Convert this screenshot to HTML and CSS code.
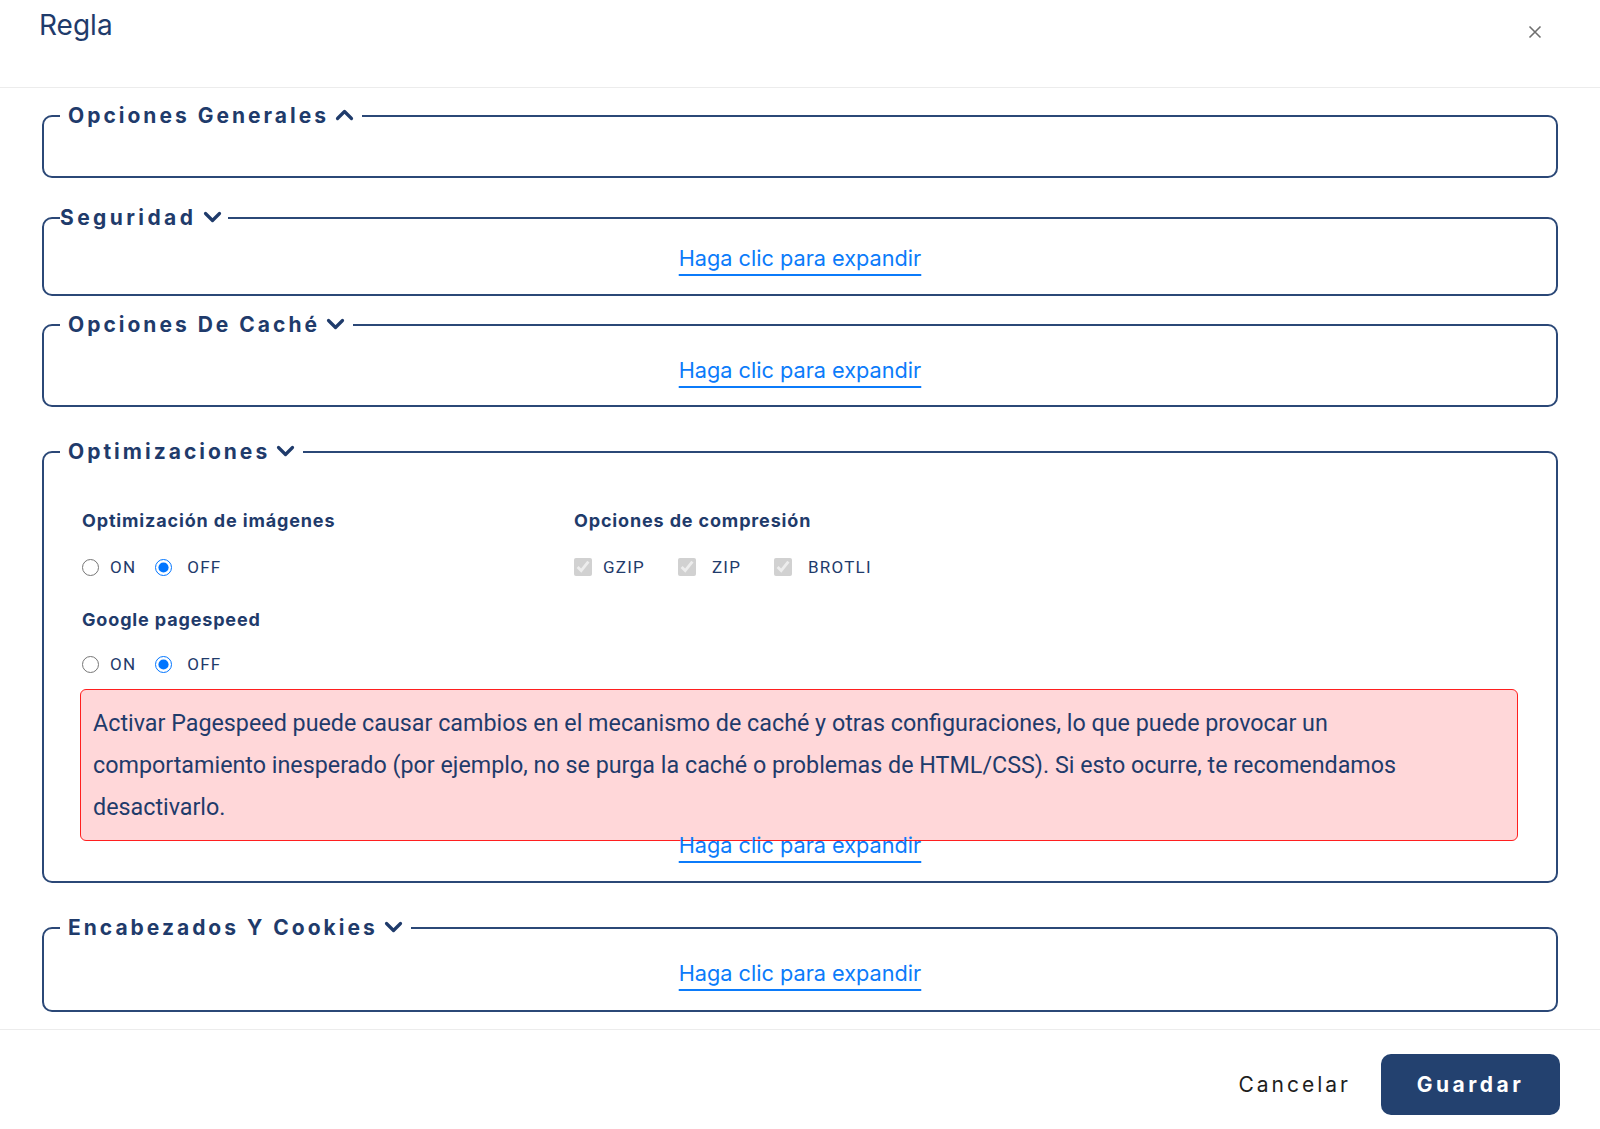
FILE: index.html
```html
<!DOCTYPE html>
<html lang="es">
<head>
  <meta charset="utf-8">
  <title>Regla</title>
  <link rel="stylesheet" href="styles.css">
</head>
<body>
  <div class="modal">
    <div class="modal-header">
      <h2 class="modal-title">Regla</h2>
      <button class="close" aria-label="Cerrar">
        <svg width="14" height="14" viewBox="0 0 14 14"><path d="M1.5 1.5 L12.5 12.5 M12.5 1.5 L1.5 12.5" stroke="#6f6f6f" stroke-width="1.6" fill="none"/></svg>
      </button>
    </div>

    <div class="modal-body">
      <fieldset class="group group-general">
        <legend class="group-legend spaced">Opciones Generales
          <svg class="chevron" width="19" height="12" viewBox="0 0 19 12"><path d="M2.5 9.5 L9.5 2.5 L16.5 9.5" /></svg>
        </legend>
        <div class="group-empty"></div>
      </fieldset>

      <fieldset class="group group-security">
        <legend class="group-legend tight">Seguridad
          <svg class="chevron" width="19" height="12" viewBox="0 0 19 12"><path d="M2.5 2.5 L9.5 9.5 L16.5 2.5" /></svg>
        </legend>
        <div class="expand expand-first"><a href="#">Haga clic para expandir</a></div>
      </fieldset>

      <fieldset class="group group-cache">
        <legend class="group-legend spaced">Opciones De Caché
          <svg class="chevron" width="19" height="12" viewBox="0 0 19 12"><path d="M2.5 2.5 L9.5 9.5 L16.5 2.5" /></svg>
        </legend>
        <div class="expand"><a href="#">Haga clic para expandir</a></div>
      </fieldset>

      <fieldset class="group group-opt">
        <legend class="group-legend spaced">Optimizaciones
          <svg class="chevron" width="19" height="12" viewBox="0 0 19 12"><path d="M2.5 2.5 L9.5 9.5 L16.5 2.5" /></svg>
        </legend>
        <div class="opt-body">
          <div class="opt-grid">
            <div class="opt-item first">
              <div class="opt-label">Optimización de imágenes</div>
              <div class="opt-row">
                <input type="radio" name="img" id="img-on"><label for="img-on">ON</label>
                <input type="radio" name="img" id="img-off" checked><label for="img-off">OFF</label>
              </div>
            </div>
            <div class="opt-item first">
              <div class="opt-label">Opciones de compresión</div>
              <div class="opt-row">
                <input type="checkbox" id="gzip" checked disabled><label for="gzip" class="cb-label">GZIP</label>
                <input type="checkbox" id="zip" checked disabled><label for="zip" class="cb-label wide">ZIP</label>
                <input type="checkbox" id="brotli" checked disabled><label for="brotli" class="cb-label wide">BROTLI</label>
              </div>
            </div>
            <div class="opt-item">
              <div class="opt-label">Google pagespeed</div>
              <div class="opt-row">
                <input type="radio" name="ps" id="ps-on"><label for="ps-on">ON</label>
                <input type="radio" name="ps" id="ps-off" checked><label for="ps-off">OFF</label>
              </div>
            </div>
          </div>
          <div class="alert">Activar Pagespeed puede causar cambios en el mecanismo de caché y otras configuraciones, lo que puede provocar un comportamiento inesperado (por ejemplo, no se purga la caché o problemas de HTML/CSS). Si esto ocurre, te recomendamos desactivarlo.</div>
        </div>
        <div class="expand expand-under"><a href="#">Haga clic para expandir</a></div>
      </fieldset>

      <fieldset class="group group-headers">
        <legend class="group-legend spaced">Encabezados Y Cookies
          <svg class="chevron" width="19" height="12" viewBox="0 0 19 12"><path d="M2.5 2.5 L9.5 9.5 L16.5 2.5" /></svg>
        </legend>
        <div class="expand expand-last"><a href="#">Haga clic para expandir</a></div>
      </fieldset>
    </div>

    <div class="modal-footer">
      <button class="btn-cancel">Cancelar</button>
      <button class="btn-save">Guardar</button>
    </div>
  </div>
</body>
</html>
```

FILE: styles.css
```css
body {
  margin: 0;
  background: #fff;
  font-family: "Inter", "Liberation Sans", sans-serif;
  color: #1f3b6b;
}
.modal {
  width: 1600px;
}

/* header */
.modal-header {
  display: flex;
  justify-content: space-between;
  align-items: flex-start;
  height: 87px;
  border-bottom: 1px solid #ececec;
  padding: 0 58px 0 39px;
}
.modal-title {
  margin: 8px 0 0;
  font-size: 28px;
  line-height: 34px;
  font-weight: 400;
  color: #1f3b6b;
}
.close {
  margin-top: 25px;
  padding: 0;
  border: 0;
  background: none;
  width: 14px;
  height: 14px;
  cursor: pointer;
}
.close svg {
  display: block;
}

/* body */
.modal-body {
  padding: 14px 42px 17px;
}
.group {
  margin: 0;
  border: 2px solid #2b4877;
  border-radius: 10px;
  padding: 0 16px;
  min-width: 0;
}
.group-security { margin-top: 26px; }
.group-cache { margin-top: 15px; }
.group-opt { margin-top: 31px; }
.group-headers { margin-top: 31px; }

.group-legend {
  font-size: 21px;
  line-height: 24px;
  font-weight: 700;
  letter-spacing: 3px;
  color: #1f3b6b;
  padding: 2px 8px 2px;
  white-space: nowrap;
}
.group-legend.tight {
  padding: 2px 6px 2px 0;
  letter-spacing: 3.4px;
}
.chevron {
  margin-left: -2px;
  vertical-align: 2px;
}
.chevron path {
  fill: none;
  stroke: #1f3b6b;
  stroke-width: 3.2;
  stroke-linecap: round;
  stroke-linejoin: round;
}
.group-empty {
  height: 46px;
}

.expand {
  text-align: center;
  padding: 16px 0 20px;
  font-size: 21.7px;
  line-height: 30px;
}
.expand-first {
  padding: 11px 0 21px;
}
.expand-under {
  padding: 0 0 21px;
}
.expand-last {
  padding: 16px 0 22px;
}
.expand a {
  color: #0b7bfa;
  text-decoration: underline;
  text-decoration-thickness: 1.5px;
  text-underline-offset: 8px;
}

/* optimizaciones */
.opt-body {
  padding: 44px 22px 0 20px;
}
.opt-grid {
  display: grid;
  grid-template-columns: 492px 1fr;
  row-gap: 31px;
  padding-left: 2px;
}
.opt-label {
  font-size: 18px;
  line-height: 22px;
  font-weight: 700;
  letter-spacing: 0.85px;
  margin-bottom: 22px;
}
.opt-item.first .opt-label {
  margin-bottom: 24px;
}
.opt-row {
  display: flex;
  align-items: center;
  height: 22px;
  font-family: "Roboto", "Liberation Sans", sans-serif;
  font-size: 17px;
  letter-spacing: 1.2px;
}
.opt-row input[type="radio"] {
  width: 17px;
  height: 17px;
  margin: 0;
}
.opt-row label {
  margin: 0 19px 0 11px;
}
.opt-row label[for$="off"] {
  margin-left: 15px;
}
.opt-row input[type="checkbox"] {
  width: 18px;
  height: 18px;
  margin: 0;
}
.opt-row .cb-label {
  margin: 0 33px 0 11px;
}
.opt-row .cb-label.wide {
  margin-left: 16px;
}

.alert {
  margin-top: 14px;
  margin-bottom: -11px;
  padding: 12px 40px 12px 12px;
  background: #ffd7d9;
  border: 1px solid #ff1f1f;
  border-radius: 6px;
  font-family: "Roboto", "Liberation Sans", sans-serif;
  font-size: 23.3px;
  line-height: 42px;
  color: #1f3b6b;
}

/* footer */
.modal-footer {
  display: flex;
  justify-content: flex-end;
  align-items: center;
  gap: 30px;
  border-top: 1px solid #ececec;
  padding: 24px 40px 15px;
}
.btn-cancel {
  border: 0;
  background: none;
  padding: 0;
  font-family: "Inter", "Liberation Sans", sans-serif;
  font-size: 21px;
  letter-spacing: 3px;
  color: #1e1e1e;
  cursor: pointer;
}
.btn-save {
  width: 179px;
  height: 61px;
  border: 0;
  border-radius: 10px;
  background: #23416f;
  color: #fff;
  font-family: "Inter", "Liberation Sans", sans-serif;
  font-size: 21px;
  font-weight: 700;
  letter-spacing: 3.5px;
  cursor: pointer;
}
```
